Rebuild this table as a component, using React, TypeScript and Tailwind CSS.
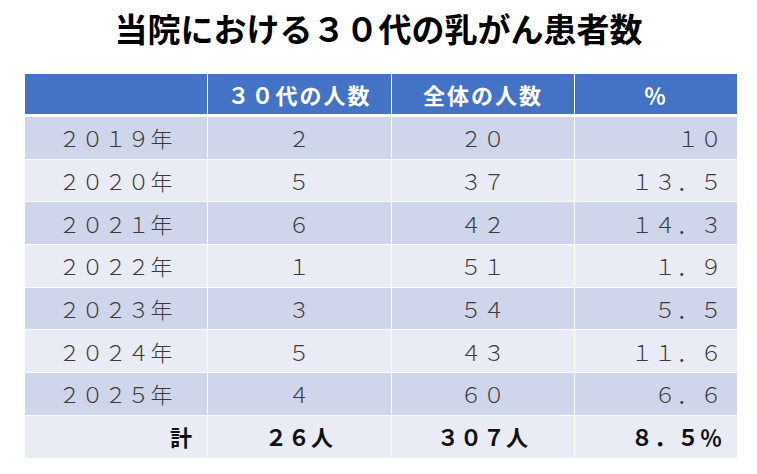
const rows = [
  { year: "２０１９年", age30: "２", total: "２０", pct: "１０" },
  { year: "２０２０年", age30: "５", total: "３７", pct: "１３．５" },
  { year: "２０２１年", age30: "６", total: "４２", pct: "１４．３" },
  { year: "２０２２年", age30: "１", total: "５１", pct: "１．９" },
  { year: "２０２３年", age30: "３", total: "５４", pct: "５．５" },
  { year: "２０２４年", age30: "５", total: "４３", pct: "１１．６" },
  { year: "２０２５年", age30: "４", total: "６０", pct: "６．６" },
];

const font = { fontFamily: '"Noto Sans CJK JP", "Noto Sans", sans-serif' };

export default function App() {
  return (
    <div className="w-[757px] h-[474px] bg-white overflow-hidden" style={font}>
      {/* Title */}
      <div className="h-[56px] flex items-center justify-center">
        <h1 className="text-[33px] font-bold text-black leading-none">
          当院における３０代の乳がん患者数
        </h1>
      </div>

      {/* Table */}
      <div className="mt-[18px] ml-[25px] w-[712px]">
        <div className="grid grid-cols-[182px_183px_182px_162px] gap-x-[1px] h-[40px] bg-white">
          <div className="bg-[#4472c4]" />
          {["３０代の人数", "全体の人数", "％"].map((h) => (
            <div
              key={h}
              className="bg-[#4472c4] flex items-center justify-center text-white font-bold text-[22px] tracking-[2px]"
            >
              {h}
            </div>
          ))}
        </div>

        <div className="mt-[3px] flex flex-col gap-y-[1px]">
          {rows.map((r, i) => {
            const bg = i % 2 === 0 ? "bg-[#cfd5ea]" : "bg-[#e9ebf5]";
            return (
              <div
                key={r.year}
                className="grid grid-cols-[182px_183px_182px_162px] gap-x-[1px] h-[41.7px] text-[22px] font-light text-[#3b3b3b] tracking-[1px]"
              >
                <div className={`${bg} flex items-center justify-center`}>{r.year}</div>
                <div className={`${bg} flex items-center justify-center`}>{r.age30}</div>
                <div className={`${bg} flex items-center justify-center`}>{r.total}</div>
                <div className={`${bg} flex items-center justify-end pr-[14px]`}>{r.pct}</div>
              </div>
            );
          })}

          {/* Total */}
          <div className="grid grid-cols-[182px_183px_182px_162px] gap-x-[1px] h-[41.7px] text-[22px] font-bold text-[#111] tracking-[1px]">
            <div className="bg-[#e9ebf5] flex items-center justify-end pr-[14px]">計</div>
            <div className="bg-[#e9ebf5] flex items-center justify-center">２６人</div>
            <div className="bg-[#e9ebf5] flex items-center justify-center">３０７人</div>
            <div className="bg-[#e9ebf5] flex items-center justify-end pr-[14px]">８．５％</div>
          </div>
        </div>
      </div>
    </div>
  );
}
